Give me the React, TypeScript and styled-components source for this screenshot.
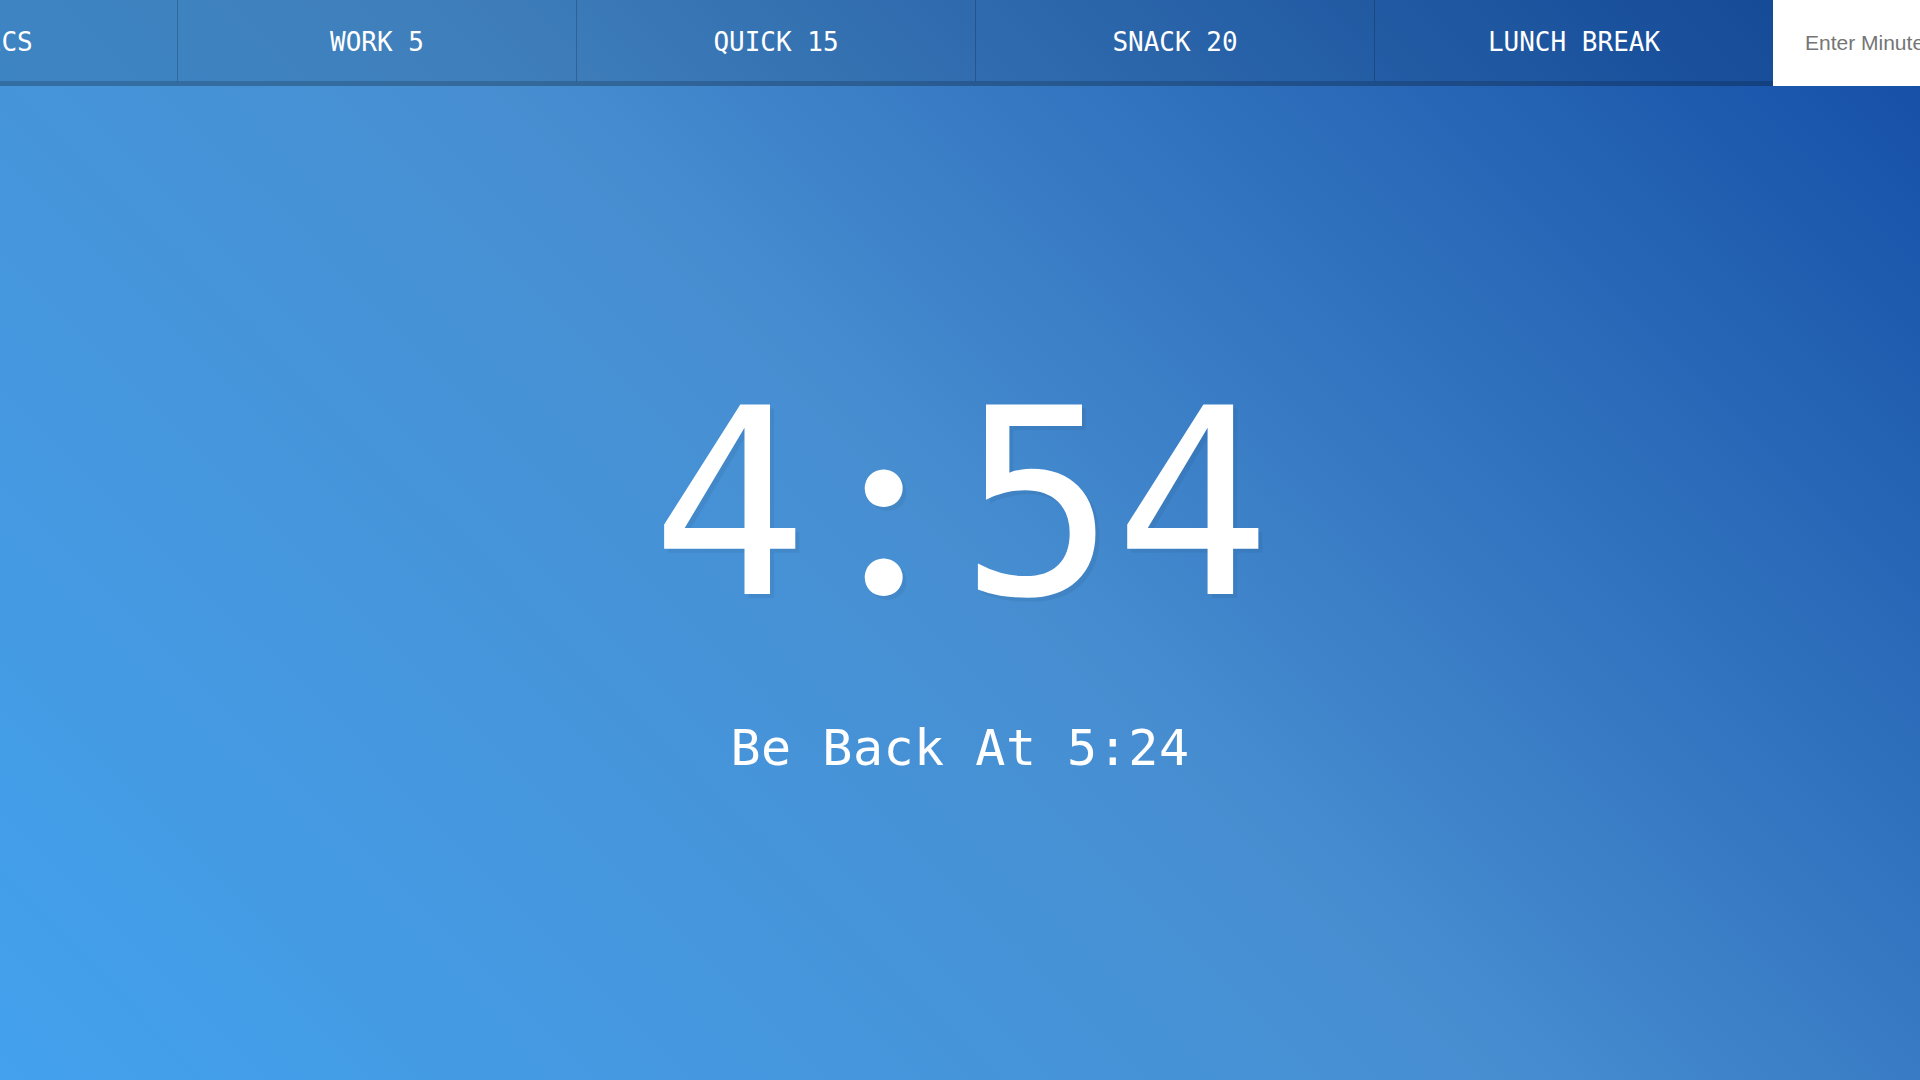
import React from 'react';
import styled, { createGlobalStyle } from 'styled-components';

const GlobalStyle = createGlobalStyle`
  html, body {
    margin: 0;
    padding: 0;
    height: 100%;
  }
  body {
    font-family: 'DejaVu Sans Mono', monospace;
    overflow: hidden;
  }
`;

const Page = styled.div`
  width: 1920px;
  height: 1080px;
  display: flex;
  flex-direction: column;
  overflow: hidden;
  background: linear-gradient(45deg, #43a1ed 0%, #478ed1 50%, #134da5 100%);
`;

const Controls = styled.div`
  display: flex;
  margin-left: -222px;
  height: 86px;
  flex-shrink: 0;
`;

const TimerButton = styled.button`
  width: 399px;
  flex-shrink: 0;
  background: rgba(0, 0, 0, 0.1);
  border: 0;
  border-left: 1px solid rgba(0, 0, 0, 0.2);
  border-bottom: 5px solid rgba(0, 0, 0, 0.17);
  color: white;
  font-family: 'DejaVu Sans Mono', monospace;
  font-size: 26px;
  text-transform: uppercase;
  padding: 0;
  padding-top: 3px;
  cursor: pointer;
`;

const MinutesForm = styled.form`
  width: 399px;
  flex-shrink: 0;
  display: flex;
`;

const MinutesInput = styled.input`
  flex: 1;
  min-width: 0;
  border: 0;
  padding: 0 32px;
  background: white;
  font-family: 'Liberation Sans', Arial, sans-serif;
  font-size: 21px;
  outline: none;

  ::placeholder {
    color: #808080;
  }
`;

const Display = styled.div`
  flex: 1;
  display: flex;
  flex-direction: column;
  align-items: center;
  justify-content: center;
  padding-bottom: 21px;
`;

const TimeLeft = styled.h1`
  margin: 0;
  font-family: 'DejaVu Sans Mono', monospace;
  font-weight: normal;
  font-size: 260px;
  line-height: 1;
  color: white;
  letter-spacing: -2px;
  text-shadow: 4px 4px 0 rgba(0, 0, 0, 0.05);
`;

const Colon = styled.span`
  display: inline-block;
  width: 154px;
  text-align: center;
  font-family: Lato, 'DejaVu Sans', sans-serif;
  font-weight: 700;
  font-size: 250px;
`;

const EndTime = styled.p`
  margin: 89px 0 0;
  font-family: 'DejaVu Sans Mono', monospace;
  font-size: 50px;
  line-height: 1;
  color: white;
  letter-spacing: 0.5px;
`;

const presets = ['20 Secs', 'Work 5', 'Quick 15', 'Snack 20', 'Lunch Break'];

const App = () => {
  const minutes = 4;
  const seconds = '54';

  return (
    <Page>
      <GlobalStyle />
      <Controls>
        {presets.map((label) => (
          <TimerButton key={label}>{label}</TimerButton>
        ))}
        <MinutesForm onSubmit={(e) => e.preventDefault()}>
          <MinutesInput type="text" name="minutes" placeholder="Enter Minutes" />
        </MinutesForm>
      </Controls>
      <Display>
        <TimeLeft>
          {minutes}
          <Colon>:</Colon>
          {seconds}
        </TimeLeft>
        <EndTime>Be Back At 5:24</EndTime>
      </Display>
    </Page>
  );
};

export default App;
